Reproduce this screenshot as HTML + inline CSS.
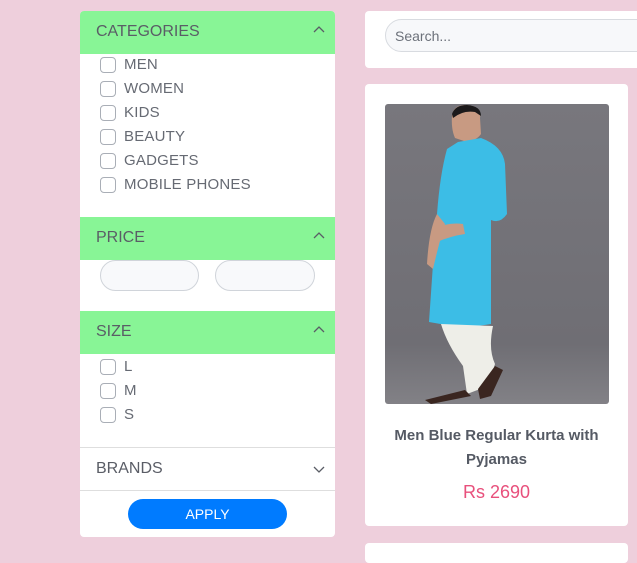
<!DOCTYPE html>
<html><head><meta charset="utf-8"><style>
*{box-sizing:border-box;margin:0;padding:0}
body{width:637px;height:548px;background:#eecfdc;font-family:"Liberation Sans",sans-serif;position:relative;overflow:hidden;color:#555a64}
.card{position:absolute;background:#fff;border-radius:4px}
.hdr{position:absolute;left:0;width:255px;height:43px;background:#88f596;font-size:16px;color:#5a5d66;padding:12px 0 0 16px}
.chev{position:absolute;right:10px;top:14px}
.item{position:absolute;left:20px;font-size:15px;color:#666a73;height:20px}
.item i{position:absolute;left:0;top:1px;width:16px;height:16px;border:1px solid #a9aeb6;border-radius:4px}
.item span{position:absolute;left:24px;top:0;white-space:nowrap;letter-spacing:0.2px}
.inp{position:absolute;top:249px;height:31px;border:1px solid #d0d4da;border-radius:16px;background:#f8f9fb}
</style></head><body>
<div class="card" style="left:80px;top:11px;width:255px;height:526px">
 <div class="hdr" style="top:0;border-radius:4px 4px 0 0">CATEGORIES<svg class="chev" width="12" height="8" viewBox="0 0 12 8"><path d="M1 7L6 2L11 7" fill="none" stroke="#5a5d66" stroke-width="1.3"/></svg></div>
 <div class="item" style="top:45px"><i></i><span>MEN</span></div>
 <div class="item" style="top:69px"><i></i><span>WOMEN</span></div>
 <div class="item" style="top:93px"><i></i><span>KIDS</span></div>
 <div class="item" style="top:117px"><i></i><span>BEAUTY</span></div>
 <div class="item" style="top:141px"><i></i><span>GADGETS</span></div>
 <div class="item" style="top:165px"><i></i><span>MOBILE PHONES</span></div>
 <div class="hdr" style="top:206px">PRICE<svg class="chev" width="12" height="8" viewBox="0 0 12 8"><path d="M1 7L6 2L11 7" fill="none" stroke="#5a5d66" stroke-width="1.3"/></svg></div>
 <div class="inp" style="left:20px;width:99px"></div>
 <div class="inp" style="left:135px;width:100px"></div>
 <div class="hdr" style="top:300px">SIZE<svg class="chev" width="12" height="8" viewBox="0 0 12 8"><path d="M1 7L6 2L11 7" fill="none" stroke="#5a5d66" stroke-width="1.3"/></svg></div>
 <div class="item" style="top:347px"><i></i><span>L</span></div>
 <div class="item" style="top:371px"><i></i><span>M</span></div>
 <div class="item" style="top:395px"><i></i><span>S</span></div>
 <div style="position:absolute;top:436px;left:0;width:255px;border-top:1px solid #dedede"></div>
 <div style="position:absolute;top:449px;left:16px;font-size:16px;color:#5a5d66">BRANDS</div>
 <svg style="position:absolute;right:10px;top:455px" width="12" height="8" viewBox="0 0 12 8"><path d="M1 1L6 6L11 1" fill="none" stroke="#5a5d66" stroke-width="1.3"/></svg>
 <div style="position:absolute;top:479px;left:0;width:255px;border-top:1px solid #dedede"></div>
 <div style="position:absolute;top:488px;left:48px;width:159px;height:30px;background:#007bff;border-radius:15px;color:#fff;font-size:14px;text-align:center;line-height:30px">APPLY</div>
</div>
<div class="card" style="left:365px;top:11px;width:280px;height:57px">
 <div style="position:absolute;left:20px;top:8px;width:270px;height:33px;border:1px solid #d8dbe0;border-radius:17px;background:#f7f8fa;font-size:14px;color:#6c717a;padding:8px 0 0 9px">Search...</div>
</div>
<div class="card" style="left:365px;top:84px;width:263px;height:442px">
 <svg style="position:absolute;left:20px;top:20px;border-radius:3px" width="224" height="300" viewBox="0 0 224 300">
  <defs><linearGradient id="bg" x1="0" y1="0" x2="0" y2="1"><stop offset="0" stop-color="#78777d"/><stop offset="0.8" stop-color="#6f6e74"/><stop offset="1" stop-color="#828186"/></linearGradient></defs>
  <rect width="224" height="300" fill="url(#bg)"/>
  <path d="M67 12Q68 1 81 1Q97 2 95 14L96 30Q92 36 82 38L70 34Q66 25 67 12Z" fill="#c89a82"/>
  <path d="M67 10Q70 1 82 1Q96 2 96 12L90 8Q78 6 68 14Z" fill="#1c1a1b"/>
  <path d="M73 38L96 34Q118 42 120 60L122 110Q115 120 106 116L106 220Q80 225 44 218L48 160L52 110Q55 70 62 45Z" fill="#3cbde6"/>
  <path d="M52 110Q44 125 42 160L48 165Q55 135 60 120Z" fill="#c89a82"/>
  <path d="M50 125Q62 118 78 120L80 130Q66 132 52 138Z" fill="#c89a82"/>
  <path d="M56 220L108 222Q103 245 110 260L103 282L82 290L78 262Q62 240 56 220Z" fill="#eeeee8"/>
  <path d="M40 296L80 286L86 292L46 300Z" fill="#3a2620"/>
  <path d="M93 285L110 262L118 266L106 292L95 295Z" fill="#3a2620"/>
 </svg>
 <div style="position:absolute;left:0;width:263px;top:340px;text-align:center;font-size:15px;font-weight:bold;color:#555a64;line-height:24px">Men Blue Regular Kurta with<br>Pyjamas</div>
 <div style="position:absolute;left:0;width:263px;top:398px;text-align:center;font-size:18px;color:#e8507c">Rs 2690</div>
</div>
<div class="card" style="left:365px;top:543px;width:263px;height:20px"></div>
</body></html>
